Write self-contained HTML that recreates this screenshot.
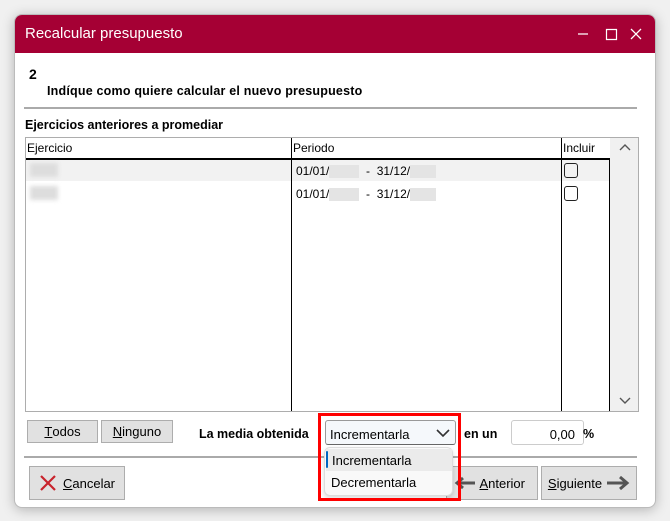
<!DOCTYPE html>
<html><head><style>
*{box-sizing:border-box;margin:0;padding:0}
body{width:670px;height:521px;background:#f0f0f0;position:relative;font-family:"Liberation Sans",sans-serif;font-size:12px;color:#000;overflow:hidden}
.a{position:absolute}
.win{left:14px;top:14px;width:642px;height:494px;background:#fff;border:1px solid #bbb;border-radius:8px;box-shadow:0 2px 12px rgba(0,0,0,.25);overflow:hidden}
.title{left:0;top:0;width:642px;height:38px;background:#a50034;color:#fff;font-size:15px}
.btn{background:#e1e1e1;border:1px solid #adadad;font-size:13px;display:flex;align-items:center;justify-content:center}
.blur{background:#ddd;filter:blur(2px)}
.b{font-weight:bold}
</style></head><body>
<div class="a win">
 <div class="a title"><span class="a" style="left:10px;top:10px">Recalcular presupuesto</span>
  <svg class="a" style="left:555px;top:8px" width="85" height="22"><path d="M8 11H18" stroke="#fff" stroke-width="1.2"/><path d="M36.5 6.5H46.5V16.5H36.5Z" stroke="#fff" stroke-width="1.2" fill="none"/><path d="M61 6L71 16M71 6L61 16" stroke="#fff" stroke-width="1.3"/></svg>
 </div>
</div>
<div class="a b" style="left:29px;top:66px;font-size:14px">2</div>
<div class="a b" style="left:47px;top:84px;font-size:12.5px;letter-spacing:.2px">Indíque como quiere calcular el nuevo presupuesto</div>
<div class="a" style="left:24px;top:107px;width:613px;height:2px;background:#aaa"></div>
<div class="a b" style="left:25px;top:118px;font-size:12.5px">Ejercicios anteriores a promediar</div>
<div class="a" style="left:25px;top:137px;width:614px;height:275px;border:1px solid #adadad;background:#fff"></div>
<div class="a" style="left:26px;top:158px;width:583px;height:2px;background:#000"></div>
<div class="a" style="left:26px;top:160px;width:583px;height:21px;background:#f2f2f2"></div>
<div class="a" style="left:291px;top:138px;width:1px;height:273px;background:#000"></div>
<div class="a" style="left:561px;top:138px;width:1px;height:273px;background:#000"></div>
<div class="a" style="left:609px;top:158px;width:1px;height:253px;background:#000"></div>
<div class="a" style="left:610px;top:138px;width:28px;height:273px;background:#f0f0f0"></div>
<svg class="a" style="left:619px;top:144px" width="12" height="8"><path d="M1 6L6 1L11 6" stroke="#555" stroke-width="1.4" fill="none"/></svg>
<svg class="a" style="left:619px;top:397px" width="12" height="8"><path d="M1 1L6 6L11 1" stroke="#555" stroke-width="1.4" fill="none"/></svg>
<div class="a" style="left:27px;top:141px">Ejercicio</div>
<div class="a" style="left:293px;top:141px">Periodo</div>
<div class="a" style="left:563px;top:141px">Incluir</div>
<div class="a blur" style="left:30px;top:163px;width:28px;height:14px"></div>
<div class="a blur" style="left:30px;top:186px;width:28px;height:14px"></div>
<div class="a" style="left:296px;top:164px">01/01/<span style="display:inline-block;width:30px;height:13px;background:#e4e4e4;vertical-align:middle"></span> &nbsp;- &nbsp;31/12/<span style="display:inline-block;width:26px;height:13px;background:#e4e4e4;vertical-align:middle"></span></div>
<div class="a" style="left:296px;top:187px">01/01/<span style="display:inline-block;width:30px;height:13px;background:#e4e4e4;vertical-align:middle"></span> &nbsp;- &nbsp;31/12/<span style="display:inline-block;width:26px;height:13px;background:#e4e4e4;vertical-align:middle"></span></div>
<div class="a" style="left:564px;top:163px;width:14px;height:15px;border:1.5px solid #222;border-radius:3px"></div>
<div class="a" style="left:564px;top:186px;width:14px;height:15px;border:1.5px solid #222;border-radius:3px"></div>
<div class="a btn" style="left:27px;top:420px;width:71px;height:23px"><u>T</u>odos</div>
<div class="a btn" style="left:101px;top:420px;width:72px;height:23px"><u>N</u>inguno</div>
<div class="a b" style="left:199px;top:427px;font-size:12.5px">La media obtenida</div>
<div class="a" style="left:325px;top:420px;width:131px;height:25px;border:1px solid #999;border-bottom:1px solid #666;border-radius:3px;background:#f5f8fb;font-size:13px;padding:6px 0 0 4px">Incrementarla
 <svg class="a" style="left:110px;top:8px" width="14" height="9"><path d="M1 1L7 7L13 1" stroke="#333" stroke-width="1.6" fill="none"/></svg></div>
<div class="a b" style="left:464px;top:427px;font-size:12.5px">en un</div>
<div class="a" style="left:511px;top:420px;width:73px;height:25px;border:1px solid #ccc;border-radius:3px;background:#fff;text-align:right;padding:6px 8px 0 0;font-size:13px">0,00</div>
<div class="a b" style="left:583px;top:427px;font-size:12.5px">%</div>
<div class="a" style="left:24px;top:456px;width:613px;height:2px;background:#aaa"></div>
<div class="a btn" style="left:29px;top:466px;width:96px;height:34px"><svg width="18" height="18" style="margin-right:6px"><path d="M2 2L16 16M16 2L2 16" stroke="#c8232c" stroke-width="2.2"/></svg><u>C</u>ancelar</div>
<div class="a btn" style="left:446px;top:466px;width:92px;height:34px;justify-content:flex-end;padding-right:12px"><svg width="22" height="14" style="margin-right:3px"><path d="M21 7H4M9 2L3 7L9 12" stroke="#555" stroke-width="3" fill="none"/></svg><u>A</u>nterior</div>
<div class="a btn" style="left:541px;top:466px;width:96px;height:34px"><u>S</u>iguiente<svg width="24" height="16" style="margin-left:4px"><path d="M1 8H20M14 2L21 8L14 14" stroke="#555" stroke-width="3" fill="none"/></svg></div>
<div class="a" style="left:324px;top:447px;width:129px;height:49px;background:#f9f9f9;border:1px solid #ddd;border-radius:6px;box-shadow:0 2px 4px rgba(0,0,0,.15);font-size:13px">
 <div class="a" style="left:1px;top:1px;width:126px;height:22px;background:#ebebeb"></div>
 <div class="a" style="left:1px;top:3px;width:2px;height:17px;background:#0067c0;border-radius:1px"></div>
 <div class="a" style="left:7px;top:5px">Incrementarla</div>
 <div class="a" style="left:6px;top:27px">Decrementarla</div>
</div>
<div class="a" style="left:318px;top:413px;width:143px;height:88px;border:3px solid #f00"></div>
</body></html>
